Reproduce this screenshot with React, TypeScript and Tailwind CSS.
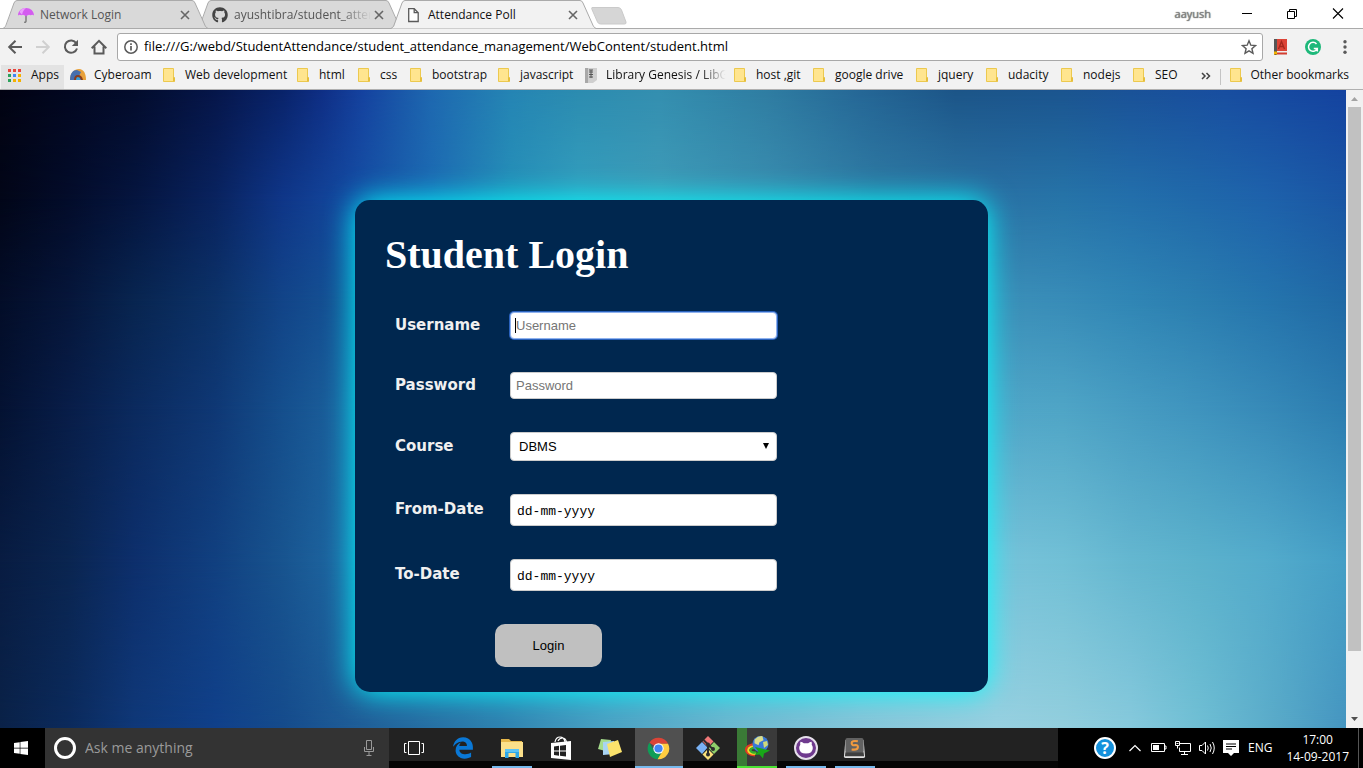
import React from "react";
import { FaWindows, FaEdgeLegacy, FaGithub, FaGithubAlt } from "react-icons/fa";

const uiFont = "font-['Open_Sans','Noto_Sans',sans-serif]";

/* ---------- tab strip ---------- */

function UmbrellaIcon() {
  return (
    <svg viewBox="0 0 16 16" className="h-4 w-4">
      <path d="M8 7v7.200q0 1.200-1.800 1" fill="none" stroke="#777" strokeWidth="1.4" />
      <path d="M0 8.500C0 4 3.500 1 8 1s8 3 8 7.500q-1.500-1.200-3.500-.2Q10.500 7 8 9.500 5.500 7 3.500 8.300 1.500 7.300 0 8.500Z" fill="#d45cf0" />
      <path d="M4 7.800Q5 3 8 1 3 1 1.500 5Z" fill="#eaa0fb" />
    </svg>
  );
}

function PageIcon() {
  return (
    <svg viewBox="0 0 16 16" className="h-4 w-4" fill="none" stroke="#5a5a5a" strokeWidth="1.3">
      <path d="M2.700 1.700h5.500l4 4v8.800H2.700z" fill="#fff" />
      <path d="M8.200 1.700v4h4" />
    </svg>
  );
}

type TabProps = { icon: React.ReactNode; title: string; active?: boolean; faded?: boolean; first?: boolean; layer: string };

function Tab({ icon, title, active, faded, first, layer }: TabProps) {
  return (
    <div className={`relative flex h-[29px] w-[205px] shrink-0 items-center pl-[15px] pr-[15px] ${layer} ${first ? "" : "-ml-[11px]"}`}>
      <svg viewBox="0 0 205 29" preserveAspectRatio="none" className="absolute inset-0 h-full w-full">
        <path d="M0 28.500 3 26.500 11 3Q12 .5 14 .5H189Q191 .5 192 3L202 26.500 205 28.500Z" fill={active ? "#f2f2f2" : "#d9d9d9"} />
        <path d="M0 28.500 2.500 26.500 11 3Q12 .5 14 .5H189Q191 .5 192 3L202.500 26.500 205 28.500" fill="none" stroke="#aaa" />
        {!active && <path d="M0 28.500H205" stroke="#aaa" />}
      </svg>
      <span className="relative flex h-4 w-4 shrink-0 items-center justify-center">{icon}</span>
      <span
        className={`relative ml-[6px] min-w-0 flex-1 whitespace-nowrap text-xs ${active ? "text-[#111]" : "text-[#555]"} ${
          faded ? "[mask-image:linear-gradient(to_right,#000_78%,transparent_100%)]" : ""
        }`}
      >
        {title}
      </span>
      <button aria-label={`Close ${title}`} className="relative flex h-4 w-4 shrink-0 items-center justify-center">
        <svg viewBox="0 0 10 10" className="h-[10px] w-[10px]" stroke="#666" strokeWidth="1.6">
          <path d="M1 1 9 9M9 1 1 9" />
        </svg>
      </button>
    </div>
  );
}

function TabStrip() {
  return (
    <header className="relative flex h-[29px] items-start bg-white pl-[3px] shadow-[inset_0_-1px_0_#aaa]">
      <Tab first layer="z-10" icon={<UmbrellaIcon />} title="Network Login" />
      <Tab faded layer="z-0" icon={<FaGithub className="h-4 w-4 text-[#444]" />} title="ayushtibra/student_atten" />
      <Tab layer="z-20" active icon={<PageIcon />} title="Attendance Poll" />
      <button aria-label="New tab" className="-ml-[5px] mt-[7px]">
        <svg viewBox="0 0 36 18" className="h-[18px] w-9">
          <path d="M1 .5H27Q29.500.5 30.500 3L35 15Q35.500 17 33.500 17H9.500Q7.500 17 6.500 15L1 2.500Q.4.5 1 .5Z" fill="#d6d6d6" stroke="#cacaca" />
        </svg>
      </button>
      <div className="ml-auto flex h-7 items-center">
        <span className="mr-[30px] text-[11px] text-[#888] [text-shadow:0_0_1px_#333]">aayush</span>
        <button aria-label="Minimize" className="mr-[34px]">
          <svg viewBox="0 0 12 12" className="h-3 w-3" stroke="#000"><path d="M1 5.500H11" /></svg>
        </button>
        <button aria-label="Restore" className="mr-[33px]">
          <svg viewBox="0 0 12 12" className="h-3 w-3" stroke="#000" fill="none"><path d="M.5 3.500h7v7h-7zM2.500 3.500v-2h7v7h-2" /></svg>
        </button>
        <button aria-label="Close window" className="mr-[19px]">
          <svg viewBox="0 0 12 12" className="h-3 w-3" stroke="#000" strokeWidth="1.1"><path d="M1 .5 11 10.500M11 .5 1 10.500" /></svg>
        </button>
      </div>
    </header>
  );
}

/* ---------- toolbar ---------- */

function Toolbar() {
  return (
    <div className="flex h-9 items-center bg-[#f2f2f2] pl-[7px] pr-2">
      <div className="flex shrink-0 items-center gap-3">
        <button aria-label="Back">
          <svg viewBox="0 0 16 16" className="h-4 w-4" fill="none" stroke="#5a5a5a" strokeWidth="2"><path d="M15 8H2.500M8.500 1.700 2.200 8l6.300 6.300" /></svg>
        </button>
        <button aria-label="Forward">
          <svg viewBox="0 0 16 16" className="h-4 w-4" fill="none" stroke="#d0d0d0" strokeWidth="2"><path d="M1 8h12.500M7.500 1.700 13.800 8l-6.300 6.300" /></svg>
        </button>
        <button aria-label="Reload">
          <svg viewBox="0 0 16 16" className="h-4 w-4"><path d="M13.300 4.200A6.200 6.200 0 1 0 14 9.500" fill="none" stroke="#5a5a5a" strokeWidth="2" /><path d="M15 .8V7H8.800Z" fill="#5a5a5a" /></svg>
        </button>
        <button aria-label="Home">
          <svg viewBox="0 0 16 16" className="h-4 w-4" fill="none" stroke="#5a5a5a" strokeWidth="2"><path d="M.7 9.200 8 1.900l7.300 7.300M3.500 7.500v7h9v-7" /></svg>
        </button>
      </div>
      <div className="ml-[10px] flex h-7 min-w-0 flex-1 items-center rounded-[3px] border border-[#a8a8a8] bg-white pl-[6px] pr-[5px]">
        <svg viewBox="0 0 14 14" className="h-[14px] w-[14px] shrink-0"><circle cx="7" cy="7" r="6.200" fill="none" stroke="#5a5a5a" strokeWidth="1.500" /><path d="M7 6v4.500M7 3.300V5" stroke="#5a5a5a" strokeWidth="1.700" /></svg>
        <input
          aria-label="Address"
          readOnly
          value="file:///G:/webd/StudentAttendance/student_attendance_management/WebContent/student.html"
          className="ml-[6px] min-w-0 flex-1 bg-transparent text-[13px] text-black outline-none"
        />
        <button aria-label="Bookmark this page">
          <svg viewBox="0 0 16 16" className="h-4 w-4" fill="none" stroke="#5a5a5a" strokeWidth="1.400"><path d="m8 1.800 1.800 4.400 4.700.4-3.600 3.100 1.100 4.600L8 11.800l-4 2.500 1.100-4.600L1.500 6.600l4.700-.4z" /></svg>
        </button>
      </div>
      <button aria-label="Dictionary" className="ml-[10px]">
        <svg viewBox="0 0 16 16" className="h-4 w-4"><path d="M1 0h13v12H1z" fill="#dc4437" /><path d="M1 0h3v16H1z" fill="#555" /><path d="M4 12h10v3.500H4z" fill="#eee" /><path d="M4 13.500h10v2H4z" fill="#d33e31" /><path d="m5.500 10 3-7.500 3 7.500M6.600 7.500h3.900" fill="none" stroke="#a3271d" strokeWidth="1.300" /><path d="M1 12.500h3v3.500l-1.500-1L1 16z" fill="#f4b400" /></svg>
      </button>
      <button aria-label="Grammar check" className="ml-4">
        <svg viewBox="0 0 16 16" className="h-4 w-4"><circle cx="8" cy="8" r="8" fill="#1db87a" /><path d="M11.500 5A4.500 4.500 0 1 0 12.200 9.500H8.800M12.300 9v3.500" fill="none" stroke="#fff" strokeWidth="1.500" /></svg>
      </button>
      <button aria-label="Menu" className="ml-4 mr-[2px]">
        <svg viewBox="0 0 16 16" className="h-4 w-4" fill="#5a5a5a"><circle cx="8" cy="2.800" r="1.700" /><circle cx="8" cy="8" r="1.700" /><circle cx="8" cy="13.200" r="1.700" /></svg>
      </button>
    </div>
  );
}

/* ---------- bookmarks ---------- */

function FolderIcon() {
  return (
    <svg viewBox="0 0 13 15" className="h-[15px] w-[13px]">
      <path d="M.5.5h10v13H.5z" fill="#ffe58f" stroke="#ecc94f" />
      <path d="M10.500 9.500h1v4h-1z" fill="#ffe58f" stroke="#e6bf3c" />
    </svg>
  );
}

const folders = [
  { label: "Web development", width: "w-[134px]" },
  { label: "html", width: "w-[61px]" },
  { label: "css", width: "w-[52px]" },
  { label: "bootstrap", width: "w-[88px]" },
  { label: "javascript", width: "w-[86px]" },
  { label: "Library Genesis / LibG", width: "w-[150px]", book: true },
  { label: "host ,git", width: "w-[79px]" },
  { label: "google drive", width: "w-[103px]" },
  { label: "jquery", width: "w-[70px]" },
  { label: "udacity", width: "w-[75px]" },
  { label: "nodejs", width: "w-[72px]" },
  { label: "SEO", width: "w-[60px]" },
];

const appColors = ["#e8453c", "#e8453c", "#e8453c", "#2ba25c", "#4285f4", "#f5b100", "#2ba25c", "#f5b100", "#f5b100"];

function BookmarksBar() {
  return (
    <nav aria-label="Bookmarks" className="flex h-[25px] items-center border-b border-[#b0b0b0] bg-[#f2f2f2] pl-px pr-[14px] text-xs text-[#111]">
      <button className="flex h-6 w-[63px] shrink-0 items-center gap-[10px] bg-[#e3e3e3] pb-[4px] pl-[7px]">
        <svg viewBox="0 0 13 13" className="h-[13px] w-[13px]">
          {appColors.map((c, i) => (
            <rect key={i} x={(i % 3) * 5} y={Math.floor(i / 3) * 5} width="3" height="3" fill={c} />
          ))}
        </svg>
        Apps
      </button>
      <div className="flex min-w-0 flex-1 items-center pb-[4px]">
        <button className="ml-[6px] flex w-[93px] shrink-0 items-center gap-2 whitespace-nowrap">
          <svg viewBox="0 0 16 12" className="h-3 w-4 shrink-0">
            <path d="M0 11C0 4 4 0 9 0s7 5 7 11z" fill="#e8a13a" />
            <path d="M0 11C0 4 3 1 7 1l4 2-4 8z" fill="#466fae" />
            <path d="M4 11q0-5 4-5t5 5z" fill="#8a3c1c" />
            <path d="M6 11q0-3 2-3t3 3z" fill="#3aa0dc" />
          </svg>
          Cyberoam
        </button>
        {folders.map((f) => (
          <button key={f.label} className={`flex shrink-0 items-center gap-[9px] whitespace-nowrap ${f.width}`}>
            {f.book ? (
              <svg viewBox="0 0 13 15" className="h-[15px] w-[13px] shrink-0">
                <path d="M1 0h12v12l-4 3H1z" fill="#cfcfcf" />
                <path d="M1 0h3v15H1z" fill="#a8a8a8" />
                <path d="M5 2h4M5 4h4M5 6.500h4M5 9h4M7 2v8" stroke="#555" />
              </svg>
            ) : (
              <span className="shrink-0"><FolderIcon /></span>
            )}
            <span className={f.book ? "[mask-image:linear-gradient(to_right,#000_78%,transparent_98%)]" : ""}>{f.label}</span>
          </button>
        ))}
      </div>
      <button aria-label="More bookmarks" className="mr-[9px] pb-[3px]">
        <svg viewBox="0 0 10 8" className="h-2 w-[10px]" fill="none" stroke="#444" strokeWidth="1.500"><path d="m1 1 3 3-3 3M5.500 1l3 3-3 3" /></svg>
      </button>
      <span className="mr-[9px] h-4 w-px bg-[#c4c4c4]" />
      <button className="flex items-center gap-[7px] whitespace-nowrap pb-[4px]">
        <FolderIcon />
        Other bookmarks
      </button>
    </nav>
  );
}

/* ---------- page ---------- */

function Backdrop() {
  return (
    <div aria-hidden="true" className="absolute inset-0">
      <div className="absolute inset-0 bg-[linear-gradient(to_right,#020312_0%,#020720_5%,#030c2c_10%,#06164a_16%,#09236a_21%,#0f2f86_24%,#1543a0_27%,#1e68b0_32%,#2585b4_38%,#2c8cb0_43%,#348fb0_49%,#2f7da2_57%,#256796_64%,#1c5588_71%,#1b5590_79%,#1a5298_84%,#184ea0_91%,#1443a0_100%)]" />
      <div className="absolute inset-0 bg-[linear-gradient(to_right,#020618_0%,#030c2a_5%,#05153f_10%,#09235f_16%,#0f3688_21%,#144aa0_26%,#1c6ab2_32%,#2690b8_38%,#349fbe_43%,#3f9cb8_49%,#3a8eb0_57%,#2f7ba4_65%,#2a72a5_74%,#2674a8_79%,#236fab_84%,#2069aa_89%,#1e62ab_94%,#1a56a4_100%)] [mask-image:linear-gradient(to_bottom,transparent_0%,#000_17%)]" />
      <div className="absolute inset-0 bg-[linear-gradient(to_right,#030d28_0%,#06163a_5%,#082550_10%,#0c3268_16%,#124488_21%,#165698_26%,#2a80b4_40%,#3c90b8_60%,#3c90b8_74%,#388cb8_79%,#3086b5_84%,#2b7eb0_89%,#2575ad_94%,#2069a5_100%)] [mask-image:linear-gradient(to_bottom,transparent_17%,#000_33%)]" />
      <div className="absolute inset-0 bg-[linear-gradient(to_right,#041232_0%,#081d48_5%,#0b2a5e_10%,#0f3875_16%,#154f8d_21%,#1d64a0_26%,#2f88b5_40%,#50a6c8_65%,#50a6c8_74%,#4fa5c6_79%,#479cc2_84%,#3f94be_89%,#378ab8_94%,#2c7db0_100%)] [mask-image:linear-gradient(to_bottom,transparent_33%,#000_50%)]" />
      <div className="absolute inset-0 bg-[linear-gradient(to_right,#081c42_0%,#0a2550_5%,#0d2f6c_10%,#114080_16%,#18548f_21%,#1f6aa5_26%,#2f88b5_40%,#70bdd8_65%,#78c3da_74%,#72c0d6_79%,#65b7d0_84%,#5cb2cc_89%,#54accc_94%,#459fc6_100%)] [mask-image:linear-gradient(to_bottom,transparent_50%,#000_74%)]" />
      <div className="absolute inset-0 bg-[linear-gradient(to_right,#0a2248_0%,#0b2a5c_5%,#0f3878_10%,#10408a_16%,#154b8c_21%,#205f98_27%,#2f82b0_37%,#4aa2c4_45%,#6ab8d0_54%,#86c6d9_64%,#97d0e0_74%,#92cedd_79%,#86c9dc_84%,#70bfd4_89%,#58a9c8_95%,#4595c0_100%)] [mask-image:linear-gradient(to_bottom,transparent_74%,#000_100%)]" />
    </div>
  );
}

const fieldBase = "w-[267px] rounded-[4px] border bg-white outline-none";
const plainBorder = "border-[#ccc]";
const focusBorder = "border-[#8fb2ee] shadow-[0_0_0_1px_#2a62bd]";
const textField = "h-[27px] px-[5px] font-['Liberation_Sans',Arial,sans-serif] text-[13px] text-black placeholder:text-[#757575]";
const dateField = "h-8 px-[6px] pt-[2px] font-['Liberation_Mono',monospace] text-[13px] text-black placeholder:text-black";

function Row({ id, label, children }: { id: string; label: string; children: React.ReactNode }) {
  return (
    <div className="flex items-center">
      <label htmlFor={id} className="w-[115px] pb-[2px] font-['DejaVu_Sans',Verdana,sans-serif] text-[15px] font-bold leading-5 text-[#f0f0f0]">
        {label}
      </label>
      {children}
    </div>
  );
}

function LoginCard() {
  return (
    <section className="w-[633px] rounded-[15px] bg-[#00274f] pb-[25px] pt-8 shadow-[0_0_30px_#00ffff]">
      <h1 className="px-[30px] font-['Liberation_Serif','Times_New_Roman',serif] text-[40px] font-bold leading-[46px] text-white">Student Login</h1>
      <form className="mt-[34px] flex flex-col gap-[33px] px-10" onSubmit={(e) => e.preventDefault()}>
        <Row id="username" label="Username">
          <span className="relative flex">
            <input id="username" type="text" placeholder="Username" className={`${fieldBase} ${focusBorder} ${textField}`} />
            <span className="absolute left-[5px] top-[6px] h-[15px] w-px bg-black" />
          </span>
        </Row>
        <Row id="password" label="Password">
          <input id="password" type="password" placeholder="Password" className={`${fieldBase} ${plainBorder} ${textField}`} />
        </Row>
        <Row id="course" label="Course">
          <span className="relative flex">
            <select id="course" className={`${fieldBase} ${plainBorder} h-[29px] appearance-none px-2 font-['Liberation_Sans',Arial,sans-serif] text-[13px] text-black`}>
              <option>DBMS</option>
            </select>
            <svg viewBox="0 0 6 6" className="pointer-events-none absolute right-2 top-[11px] h-[6px] w-[6px]"><path d="M0 0h6L3 6z" /></svg>
          </span>
        </Row>
        <Row id="from-date" label="From-Date">
          <input id="from-date" type="text" placeholder="dd-mm-yyyy" className={`${fieldBase} ${plainBorder} ${dateField}`} />
        </Row>
        <Row id="to-date" label="To-Date">
          <input id="to-date" type="text" placeholder="dd-mm-yyyy" className={`${fieldBase} ${plainBorder} ${dateField}`} />
        </Row>
        <button type="submit" className="ml-[100px] h-[43px] w-[107px] rounded-[10px] bg-[#c0c0c0] font-['Liberation_Sans',Arial,sans-serif] text-[13px] text-black">
          Login
        </button>
      </form>
    </section>
  );
}

function Scrollbar() {
  return (
    <div aria-hidden="true" className="flex w-[17px] shrink-0 flex-col items-center bg-[#f1f1f1]">
      <svg viewBox="0 0 17 17" className="h-[17px] w-[17px]"><path d="m5 11 3.500-4 3.500 4z" fill="#a3a3a3" /></svg>
      <div className="flex w-full flex-1 flex-col px-[2px]">
        <div className="h-[90%] bg-[#c1c1c1]" />
      </div>
      <svg viewBox="0 0 17 17" className="h-[17px] w-[17px]"><path d="m5 6 3.500 4L12 6z" fill="#505050" /></svg>
    </div>
  );
}

/* ---------- taskbar ---------- */

function ExplorerIcon() {
  return (
    <svg viewBox="0 0 24 24" className="h-6 w-6">
      <path d="M1 3h8l2 2h11v16H1z" fill="#e8b84a" />
      <path d="M1 6h22v15H1z" fill="#fce08a" />
      <path d="M5 13h14v9h-3.500v-5h-7v5H5z" fill="#2fa8e8" />
      <path d="M5 13h14v3H5z" fill="#5cc4f5" />
    </svg>
  );
}

function StoreIcon() {
  return (
    <svg viewBox="0 0 24 24" className="h-6 w-6">
      <path d="M6 6q1-5 5-5t5 5M9 5q1.500-3 4.500-3t4 4" fill="none" stroke="#fff" strokeWidth="1.200" />
      <path d="m2 7 20-2v19l-20-2z" fill="#fff" />
      <path d="m5 10.500 5-.7v4.700H5zM11 9.700l6-.8v5.600h-6zM5 15.500h5v4.200l-5-.6zM11 15.500h6v5l-6-.7z" fill="#222" />
    </svg>
  );
}

function NotesIcon() {
  return (
    <svg viewBox="0 0 26 24" className="h-6 w-[26px]">
      <path d="m4 3 10 1-2 12-11-3z" fill="#a5dc8c" />
      <path d="m6 6 11-1v13l-11 1z" fill="#a8d4f4" />
      <path d="m10 8 11-4 4 12-12 5z" fill="#fbe36c" />
    </svg>
  );
}

function ChromeIcon() {
  return (
    <svg viewBox="0 0 24 24" className="h-[23px] w-[23px]">
      <path d="M12 12 2.500 6A11.200 11.200 0 0 1 22 7H12z" fill="#db4437" />
      <path d="M2.500 5.800A11.300 11.300 0 0 0 11 23.300L16 14.500 12 12 7.500 14.500z" fill="#0f9d58" />
      <path d="M22 7H12l4.300 7.500L11 23.300A11.300 11.300 0 0 0 22 7z" fill="#ffcd40" />
      <circle cx="12" cy="12" r="5.400" fill="#fff" />
      <circle cx="12" cy="12" r="4.300" fill="#4285f4" />
    </svg>
  );
}

function GitIcon() {
  return (
    <svg viewBox="0 0 26 26" className="h-[26px] w-[26px]">
      <path d="m13 1 5.500 5.500L13 12 7.500 6.500z" fill="#f07878" />
      <path d="m7 7 5.500 5.500L7 19l-6-6z" fill="#7ab2f4" />
      <path d="m19 7 6 6-6 6-5.500-6z" fill="#8fce6a" />
      <path d="m13 14 5.500 5.500L13 25l-5.500-5.500z" fill="#fbe17a" />
      <path d="M8.500 5 13 9.500v10M13 10l5 4" fill="none" stroke="#2c2c2c" strokeWidth="2" />
      <circle cx="13" cy="9.500" r="2" fill="#2c2c2c" /><circle cx="13" cy="19.500" r="2" fill="#2c2c2c" /><circle cx="18" cy="14" r="2" fill="#2c2c2c" />
    </svg>
  );
}

function DownloadIcon() {
  return (
    <svg viewBox="0 0 26 26" className="h-[26px] w-[26px]">
      <path d="M13 9Q2 9.500 2 14.500t9 6" fill="none" stroke="#e33a22" strokeWidth="2.200" />
      <path d="M14 11Q4.200 11 4.200 15t7.800 4" fill="none" stroke="#f7d52a" strokeWidth="2.200" />
      <path d="M14 13Q6.500 12.500 6.500 15.200t6 2.300" fill="none" stroke="#35b02c" strokeWidth="2.200" />
      <circle cx="16.500" cy="9" r="8" fill="#3a78d6" />
      <path d="M10.500 4.500q4-4 8-3.300l1 4-4 2-1 3-4-2z" fill="#d9dc8c" />
      <path d="m19 7 4-1 1 4-4 3z" fill="#cfd97a" />
      <path d="m11 12 15 3.500-6 3-1 5-3.500-4-5 .5 4-3.500z" fill="#18a818" />
    </svg>
  );
}

function SublimeIcon() {
  return (
    <svg viewBox="0 0 24 24" className="h-[23px] w-[23px]">
      <path d="M1 20 2.500 3h19L23 20q0 2-2 2H3q-2 0-2-2z" fill="#e2e2e2" />
      <rect x="2.500" y="1" width="19" height="15.500" rx="2" fill="#626262" />
      <path d="M2.500 16h19l.5 4H2z" fill="#3f3f3f" />
      <path d="M15.500 4.500Q9 3.500 9 6.200t3.500 2.300T15.500 11 9 13" fill="none" stroke="#f29a3f" strokeWidth="2.200" />
    </svg>
  );
}

const tasks = [
  { label: "Task view", icon: <svg viewBox="0 0 22 16" className="h-4 w-[22px]" fill="none" stroke="#fff"><path d="M5.500 1.500h11v13h-11zM3.500 3.500h-2v9h2M18.500 3.500h2v9h-2" /></svg>, frame: "w-12", line: "" },
  { label: "Edge", icon: <FaEdgeLegacy className="h-[22px] w-[22px] text-[#0a78d6]" />, frame: "w-10", line: "" },
  { label: "File Explorer", icon: <ExplorerIcon />, frame: "w-10", line: "bg-[#76b9ed]" },
  { label: "Store", icon: <StoreIcon />, frame: "w-10", line: "" },
  { label: "Sticky Notes", icon: <NotesIcon />, frame: "w-10", line: "" },
  { label: "Chrome", icon: <ChromeIcon />, frame: "w-12 bg-[#505050]", line: "bg-[#76b9ed]" },
  { label: "Git", icon: <GitIcon />, frame: "w-10", line: "" },
  { label: "Download Manager", icon: <DownloadIcon />, frame: "w-10 bg-[linear-gradient(to_right,#3a7a36_10px,#3a3a3a_10px)]", line: "bg-[#4be234]" },
  { label: "GitHub", icon: <span className="flex h-6 w-6 items-center justify-center rounded-full border-2 border-[#e6e0ea] bg-[#6f3a8e]"><svg viewBox="0 0 16 16" className="h-4 w-4"><path d="M2.500 1.800q2 .2 3.300 1.400h4.400Q11.500 2 13.500 1.800q.6 1.800.2 3Q14.800 6 14.800 8q0 5.500-6.800 5.500T1.200 8q0-2 1.100-3.200-.4-1.200.2-3z" fill="#fff" /></svg></span>, frame: "w-10", line: "bg-[#76b9ed]" },
  { label: "Sublime Text", icon: <SublimeIcon />, frame: "w-10", line: "bg-[#76b9ed]" },
];

function Taskbar() {
  return (
    <footer className="flex h-10 shrink-0 items-stretch bg-black text-white">
      <button aria-label="Start" className="flex w-[45px] shrink-0 items-center justify-center pr-[3px]">
        <FaWindows className="h-4 w-4" />
      </button>
      <div className="flex w-[344px] shrink-0 items-center bg-[#333] pl-[9px] pr-3">
        <span className="h-[22px] w-[22px] rounded-full border-[3px] border-white" />
        <input aria-label="Search" placeholder="Ask me anything" className="ml-[9px] min-w-0 flex-1 bg-transparent text-sm text-white outline-none placeholder:text-[#9a9a9a]" />
        <svg viewBox="0 0 16 18" className="h-[18px] w-4" fill="none" stroke="#999"><path d="M5.500 1.500h5v9h-5zM3.500 8v4.500h9V8M8 12.500v4M5.500 16.500h5" /></svg>
      </div>
      <div className="flex min-w-0 flex-1 bg-[linear-gradient(#222_33px,#050505_33px)]">
        {tasks.map((t) => (
          <div key={t.label} className="flex w-[49px] shrink-0 justify-center">
            <button aria-label={t.label} className={`flex flex-col ${t.frame}`}>
              <span className="flex w-full flex-1 items-center justify-center pt-[2px]">{t.icon}</span>
              <span className={`h-[2px] w-full ${t.line}`} />
            </button>
          </div>
        ))}
      </div>
      <div className="flex w-[305px] shrink-0 items-center pl-9">
        <span className="flex h-[22px] w-[22px] items-center justify-center rounded-full border-2 border-white bg-[#1591dc] text-base font-bold leading-none">?</span>
        <svg viewBox="0 0 12 8" className="ml-[13px] h-2 w-3" fill="none" stroke="#fff" strokeWidth="1.200"><path d="m.5 7 5.500-5.500L11.500 7" /></svg>
        <svg viewBox="0 0 16 10" className="ml-[10px] h-[10px] w-4" fill="none" stroke="#fff"><path d="M.5.5h13v8H.5zM13.500 3h1.500v3h-1.500" /><path d="M2 2h6v5H2z" fill="#fff" stroke="none" /></svg>
        <svg viewBox="0 0 16 14" className="ml-2 h-[14px] w-4" fill="none" stroke="#fff"><path d="M5 2.500h10.500v8H4.500V6.500M9.500 10.500v3M6 13.500h7M.5.500h4v4h-4zM2.500 4.500v3M1.500 2.500h2" /></svg>
        <svg viewBox="0 0 16 14" className="ml-2 h-[14px] w-4" fill="none" stroke="#fff"><path d="M.5 4.500h2.500L6.500 1v12L3 9.500H.5zM8.500 4.500q1.500 2.500 0 5M11 3q2.500 4 0 8M13.500 1q3.500 6 0 12" /></svg>
        <svg viewBox="0 0 16 16" className="ml-2 h-4 w-4"><path d="M0 0h16v13h-5l-3 3-3-3H0z" fill="#fff" /><path d="M3 4h10M3 6.500h10M3 9h6" stroke="#000" /></svg>
        <span className="ml-[9px] w-6 text-xs">ENG</span>
        <div className="ml-auto mr-[9px] text-center text-xs leading-[17px]">
          <div>17:00</div>
          <div>14-09-2017</div>
        </div>
        <span className="mr-1 h-full w-px bg-[#555]" />
      </div>
    </footer>
  );
}

export default function App() {
  return (
    <div className={`flex h-screen min-h-[768px] flex-col ${uiFont}`}>
      <TabStrip />
      <Toolbar />
      <BookmarksBar />
      <div className="flex min-h-0 flex-1">
        <main className="relative min-w-0 flex-1 overflow-hidden">
          <Backdrop />
          <div className="relative flex justify-center pr-[3px] pt-[110px]">
            <LoginCard />
          </div>
        </main>
        <Scrollbar />
      </div>
      <Taskbar />
    </div>
  );
}
